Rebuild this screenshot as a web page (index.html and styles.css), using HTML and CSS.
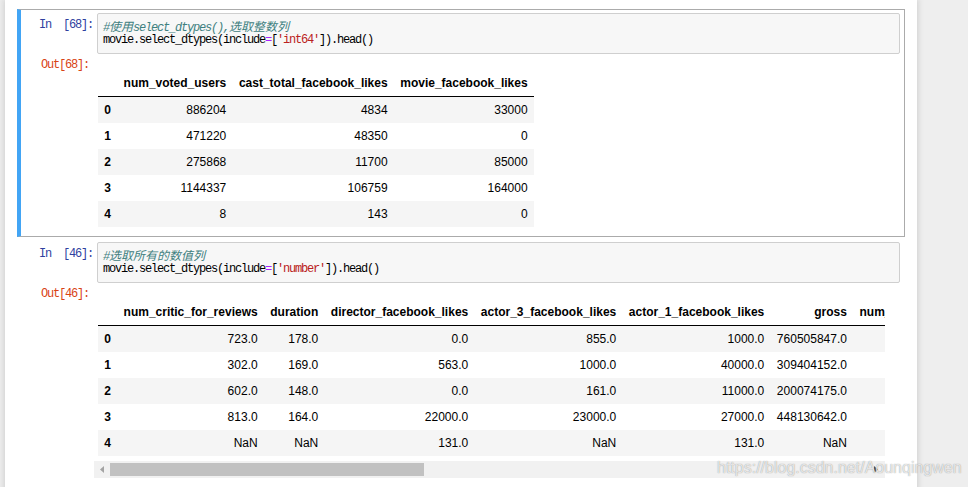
FILE: index.html
```html
<!DOCTYPE html>
<html>
<head>
<meta charset="utf-8">
<link rel="stylesheet" href="styles.css">
</head>
<body>
<div class="page">
  <div class="notebook">
    <div class="cell selected">
      <div class="input">
        <div class="prompt in-prompt">In&nbsp;&nbsp;[68]:</div>
        <div class="code">
          <div class="line"><span class="cm">#<span class="cjk">使用</span>select_dtypes(),<span class="cjk">选取整数列</span></span></div>
          <div class="line">movie.select_dtypes(include<span class="op">=</span>[<span class="str">'int64'</span>]).head()</div>
        </div>
      </div>
      <div class="output">
        <div class="prompt out-prompt">Out[68]:</div>
        <div class="subarea">
          <div class="scroller">
            <table class="df">
              <thead>
                <tr><th></th><th>num_voted_users</th><th>cast_total_facebook_likes</th><th>movie_facebook_likes</th></tr>
              </thead>
              <tbody>
                <tr><th>0</th><td>886204</td><td>4834</td><td>33000</td></tr>
                <tr><th>1</th><td>471220</td><td>48350</td><td>0</td></tr>
                <tr><th>2</th><td>275868</td><td>11700</td><td>85000</td></tr>
                <tr><th>3</th><td>1144337</td><td>106759</td><td>164000</td></tr>
                <tr><th>4</th><td>8</td><td>143</td><td>0</td></tr>
              </tbody>
            </table>
          </div>
        </div>
      </div>
    </div>

    <div class="cell">
      <div class="input">
        <div class="prompt in-prompt">In&nbsp;&nbsp;[46]:</div>
        <div class="code">
          <div class="line"><span class="cm">#<span class="cjk">选取所有的数值列</span></span></div>
          <div class="line">movie.select_dtypes(include<span class="op">=</span>[<span class="str">'number'</span>]).head()</div>
        </div>
      </div>
      <div class="output">
        <div class="prompt out-prompt">Out[46]:</div>
        <div class="subarea">
          <div class="scroller clip">
            <table class="df">
              <thead>
                <tr><th></th><th>num_critic_for_reviews</th><th>duration</th><th>director_facebook_likes</th><th>actor_3_facebook_likes</th><th>actor_1_facebook_likes</th><th>gross</th><th>num_voted_users</th><th>cast_total_facebook_likes</th></tr>
              </thead>
              <tbody>
                <tr><th>0</th><td>723.0</td><td>178.0</td><td>0.0</td><td>855.0</td><td>1000.0</td><td>760505847.0</td><td>886204</td><td>4834</td></tr>
                <tr><th>1</th><td>302.0</td><td>169.0</td><td>563.0</td><td>1000.0</td><td>40000.0</td><td>309404152.0</td><td>471220</td><td>48350</td></tr>
                <tr><th>2</th><td>602.0</td><td>148.0</td><td>0.0</td><td>161.0</td><td>11000.0</td><td>200074175.0</td><td>275868</td><td>11700</td></tr>
                <tr><th>3</th><td>813.0</td><td>164.0</td><td>22000.0</td><td>23000.0</td><td>27000.0</td><td>448130642.0</td><td>1144337</td><td>106759</td></tr>
                <tr><th>4</th><td>NaN</td><td>NaN</td><td>131.0</td><td>NaN</td><td>131.0</td><td>NaN</td><td>8</td><td>143</td></tr>
              </tbody>
            </table>
          </div>
          <div class="hscroll">
            <div class="sb-btn sb-left">
              <svg width="4" height="7" viewBox="0 0 4 7"><path d="M4 0 L0 3.5 L4 7 Z" fill="#a3a3a3"/></svg>
            </div>
            <div class="sb-track"><div class="sb-thumb"></div></div>
            <div class="sb-btn sb-right">
              <svg width="4" height="7" viewBox="0 0 4 7"><path d="M0 0 L4 3.5 L0 7 Z" fill="#505050"/></svg>
            </div>
          </div>
        </div>
      </div>
    </div>
  </div>
  <div class="watermark">https://blog.csdn.net/Aounqingwen</div>
</div>
</body>
</html>
```

FILE: styles.css
```css
html, body {
  margin: 0;
  padding: 0;
  background: #eeeeee;
  overflow: hidden;
}

.page {
  position: relative;
  width: 968px;
  height: 487px;
  overflow: hidden;
}

.notebook {
  margin-left: 5px;
  width: 888px;
  min-height: 487px;
  padding: 9px 12px 0 12px;
  background: #ffffff;
  box-shadow: 0 0 6px 1px rgba(87, 87, 87, 0.2);
  display: flex;
  flex-direction: column;
  gap: 1px;
  box-sizing: content-box;
}

.cell {
  border: 1px solid transparent;
  border-left: 4px solid transparent;
  padding: 3px 4px 4px 0;
}

.cell.selected {
  border-color: #ababab;
  border-left-color: #42a5f5;
}

.input, .output {
  display: flex;
  align-items: flex-start;
}

.prompt {
  font-family: "Liberation Mono", "Courier New", monospace;
  font-size: 12px;
  letter-spacing: -1.2px;
  line-height: 15px;
  text-align: right;
  white-space: pre;
  box-sizing: border-box;
  flex: none;
}

.in-prompt {
  width: 76px;
  padding: 5px 4px 0 0;
  color: #303f9f;
}

.out-prompt {
  width: 73px;
  padding: 4px 5px 0 0;
  color: #d84315;
}

.code {
  flex: 1;
  background: #f7f7f7;
  border: 1px solid #cfcfcf;
  border-radius: 2px;
  padding: 4px 5px 5px 5px;
  font-family: "Liberation Mono", "Courier New", monospace;
  font-size: 12px;
  letter-spacing: -1.2px;
  line-height: 15px;
  color: #000000;
}

.line {
  white-space: pre;
  height: 15px;
}

.cm {
  color: #408080;
  font-style: italic;
}

.cjk {
  font-family: "Noto Sans CJK SC", sans-serif;
  font-size: 12px;
  letter-spacing: 0;
}

.op {
  color: #aa22ff;
}

.str {
  color: #ba2121;
}

.subarea {
  width: 791px;
  flex: none;
}

.scroller {
  padding: 16px 0 5px 4px;
}

.scroller.clip {
  overflow: hidden;
}

.df {
  border-collapse: collapse;
  border-spacing: 0;
  font-family: "Liberation Sans", Arial, sans-serif;
  font-size: 12px;
  color: #000000;
  width: max-content;
}

.df th, .df td {
  padding: 6px 6.3px;
  line-height: 14px;
  text-align: right;
  white-space: nowrap;
  vertical-align: middle;
  border: none;
}

.df th {
  font-weight: bold;
}

.df thead tr {
  border-bottom: 1px solid #000000;
}

.df tbody th {
  text-align: left;
}

.df tbody tr:nth-child(odd) {
  background: #f5f5f5;
}

.hscroll {
  display: flex;
  height: 17px;
  background: #f1f1f1;
}

.sb-btn {
  flex: none;
  display: flex;
  align-items: center;
  justify-content: center;
}

.sb-left {
  width: 16px;
  justify-content: flex-start;
  padding-left: 6px;
  box-sizing: border-box;
}

.sb-right {
  width: 17px;
  justify-content: flex-start;
  padding-left: 6px;
  box-sizing: border-box;
}

.sb-track {
  flex: 1;
  padding: 2px 0;
}

.sb-thumb {
  width: 314px;
  height: 13px;
  background: #c1c1c1;
}

.watermark {
  position: absolute;
  left: 717px;
  top: 459px;
  font-family: "Liberation Sans", Arial, sans-serif;
  font-size: 16px;
  line-height: 18px;
  color: rgba(255, 255, 255, 0.75);
  text-shadow: 0 0 1px rgba(90, 90, 90, 0.7);
  white-space: nowrap;
}
```
